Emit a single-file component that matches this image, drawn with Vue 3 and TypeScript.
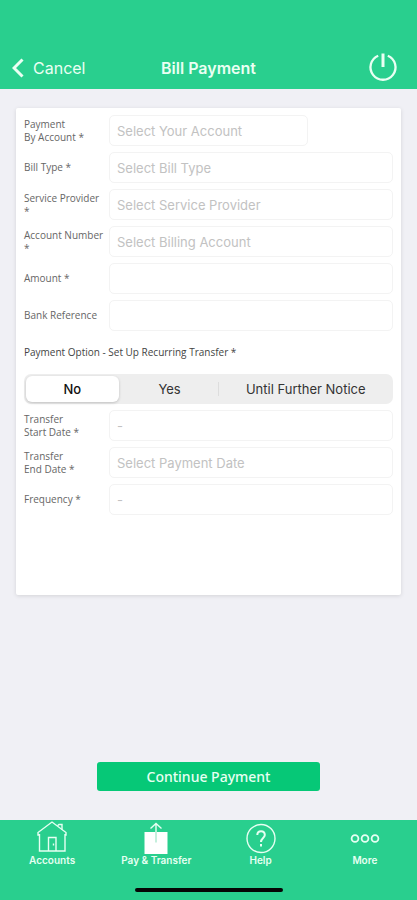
<script setup lang="ts">
import { ref } from 'vue'

interface Field {
  id: string
  lines: string[]
  kind: 'select' | 'text'
  placeholder: string
  short?: boolean
}

const paymentFields: Field[] = [
  { id: 'payment-account', lines: ['Payment', 'By Account *'], kind: 'select', placeholder: 'Select Your Account', short: true },
  { id: 'bill-type', lines: ['Bill Type *'], kind: 'select', placeholder: 'Select Bill Type' },
  { id: 'provider', lines: ['Service Provider', '*'], kind: 'select', placeholder: 'Select Service Provider' },
  { id: 'account-number', lines: ['Account Number', '*'], kind: 'select', placeholder: 'Select Billing Account' },
  { id: 'amount', lines: ['Amount *'], kind: 'text', placeholder: '' },
  { id: 'bank-reference', lines: ['Bank Reference'], kind: 'text', placeholder: '' },
]

const scheduleFields: Field[] = [
  { id: 'start-date', lines: ['Transfer', 'Start Date *'], kind: 'text', placeholder: '-' },
  { id: 'end-date', lines: ['Transfer', 'End Date *'], kind: 'text', placeholder: 'Select Payment Date' },
  { id: 'frequency', lines: ['Frequency *'], kind: 'select', placeholder: '-' },
]

const groups = [
  { name: 'payment', fields: paymentFields },
  { name: 'schedule', fields: scheduleFields },
]

const options = [
  { value: 'no', label: 'No' },
  { value: 'yes', label: 'Yes' },
  { value: 'ufn', label: 'Until Further Notice' },
]
const recurring = ref('no')
</script>

<template>
  <div class="screen">
    <header class="top">
      <button class="cancel" type="button">
        <svg class="chevron" viewBox="0 0 12 20" aria-hidden="true"><path d="M10.500 1.500 2 10l8.500 8.500" /></svg>
        <span>Cancel</span>
      </button>
      <h1 class="title">Bill Payment</h1>
      <button class="power" type="button" aria-label="Log out">
        <svg viewBox="0 0 28 28" aria-hidden="true">
          <path d="M9.200 1.700A12.500 12.500 0 1 0 18.800 1.700" />
          <path class="stem" d="M14 -.5V13" />
        </svg>
      </button>
    </header>

    <form class="content" @submit.prevent>
      <div class="card">
        <template v-for="group in groups" :key="group.name">
          <fieldset v-if="group.name === 'schedule'" class="recurring">
            <legend class="legend">Payment Option - Set Up Recurring Transfer *</legend>
            <div class="segments">
              <label
                v-for="option in options"
                :key="option.value"
                class="segment"
                :class="[option.value, { active: recurring === option.value }]"
              >
                <input v-model="recurring" class="radio" type="radio" name="recurring" :value="option.value" />
                <span>{{ option.label }}</span>
              </label>
            </div>
          </fieldset>
          <div class="rows">
            <div v-for="field in group.fields" :key="field.id" class="row">
              <label class="label" :for="field.id">
                <span v-for="line in field.lines" :key="line" class="line">{{ line }}</span>
              </label>
              <select v-if="field.kind === 'select'" :id="field.id" class="control" :class="{ short: field.short }">
                <option value="">{{ field.placeholder }}</option>
              </select>
              <input v-else :id="field.id" class="control" type="text" :placeholder="field.placeholder" />
            </div>
          </div>
        </template>
      </div>
      <button class="submit" type="submit">Continue Payment</button>
    </form>

    <footer class="bottom">
      <nav class="tabs">
        <a class="tab" href="#accounts">
          <svg class="icon" viewBox="0 0 32 32" aria-hidden="true">
            <path d="M3.500 13H2V10.500L16 0 30 10.500V13H28.500M3.500 12V29H29V12M12.500 29V15.500H20V29" />
            <path d="M21.500 3.800 23 2.500H26V7.500M17.500 21.500V23.500" />
          </svg>
          <span>Accounts</span>
        </a>
        <a class="tab" href="#transfer">
          <svg class="icon" viewBox="0 0 32 32" aria-hidden="true">
            <path class="solid" d="M4.500 10H27.500V32H4.500Z" />
            <path class="cut" d="M16 10V20.500" />
            <path d="M16 10V1.500M10.500 6.500 16 1.500 21.500 6.500" />
          </svg>
          <span>Pay &amp; Transfer</span>
        </a>
        <a class="tab" href="#help">
          <svg class="icon" viewBox="0 0 32 32" aria-hidden="true">
            <circle cx="16" cy="16.500" r="14" />
            <path class="mark" d="M12.300 13C12.300 8 19.800 8 19.800 13C19.800 16 16 16 16 20M16 22V24.500" />
          </svg>
          <span>Help</span>
        </a>
        <a class="tab" href="#more">
          <svg class="icon" viewBox="0 0 32 32" aria-hidden="true">
            <g class="rings"><circle cx="6" cy="16.500" r="3.400" /><circle cx="16" cy="16.500" r="3.400" /><circle cx="26" cy="16.500" r="3.400" /></g>
          </svg>
          <span>More</span>
        </a>
      </nav>
      <div class="home-indicator"></div>
    </footer>
  </div>
</template>

<style>
body {
  margin: 0;
  background: #f0f0f5;
}
</style>

<style scoped>
.screen,
.screen * {
  box-sizing: border-box;
}
.screen {
  display: flex;
  flex-direction: column;
  min-height: 100vh;
  background: #f0f0f5;
  font-family: Inter, "Liberation Sans", sans-serif;
}
button {
  padding: 0;
  border: 0;
  background: none;
  color: inherit;
  font: inherit;
  cursor: pointer;
}
svg {
  display: block;
  fill: none;
  stroke: currentColor;
}
.top {
  display: grid;
  grid-template-columns: 1fr auto 1fr;
  align-items: center;
  height: 89px;
  padding: 48px 12px 1px;
  background: #29cf8e;
  color: #eafff3;
}
.cancel {
  display: flex;
  align-items: center;
  gap: 9px;
  justify-self: start;
  font-size: 16px;
  line-height: 20px;
}
.chevron {
  width: 12px;
  height: 20px;
  stroke-width: 3;
}
.title {
  margin: 0;
  font-size: 16px;
  font-weight: 600;
  line-height: 20px;
}
.power {
  justify-self: end;
  padding-right: 8px;
}
.power svg {
  width: 28px;
  height: 28px;
  overflow: visible;
  stroke-width: 2.300;
}
.power .stem {
  stroke-width: 3;
}
.content {
  display: flex;
  flex: 1;
  flex-direction: column;
  align-items: center;
  padding: 19px 16px 29px;
}
.card {
  flex: 1;
  width: 100%;
  padding: 7px 8px;
  border-radius: 2px;
  background: #fff;
  box-shadow: 0 1px 4px rgba(0, 0, 0, 0.12);
}
.rows {
  display: grid;
  gap: 6px;
}
.row {
  display: grid;
  grid-template-columns: 85px 1fr;
  align-items: center;
}
.label {
  color: #666;
  font: 10px/13px "Open Sans", sans-serif;
}
.line {
  display: block;
  white-space: nowrap;
}
.control {
  appearance: none;
  width: 100%;
  height: 31px;
  margin: 0;
  padding: 0 7px;
  border: 1px solid #f3f3f3;
  border-radius: 5px;
  outline: none;
  background: #fff;
  color: #c2c2c2;
  font-family: inherit;
  font-size: 13px;
}
.control::placeholder {
  color: #c2c2c2;
  opacity: 1;
}
.control.short {
  width: 70%;
}
.recurring {
  min-width: 0;
  margin: 0;
  padding: 0 0 6px;
  border: 0;
}
.legend {
  padding: 14px 0;
  color: #444;
  font: 10px/15px "Open Sans", sans-serif;
}
.segments {
  display: grid;
  grid-template-columns: 97fr 98fr 175fr;
  height: 30px;
  border-radius: 7px;
  background: #eee;
}
.segment {
  position: relative;
  display: flex;
  align-items: center;
  justify-content: center;
  margin: 2px;
  border-radius: 6px;
  color: #333;
  font-size: 13px;
  cursor: pointer;
}
.segment.active {
  background: #fff;
  box-shadow: 0 1px 3px rgba(0, 0, 0, 0.2);
  color: #111;
  font-weight: 500;
}
.segment.ufn::before {
  position: absolute;
  top: 6px;
  bottom: 6px;
  left: -2px;
  width: 1px;
  background: #ddd;
  content: "";
}
.radio {
  position: absolute;
  inset: 0;
  width: 100%;
  height: 100%;
  margin: 0;
  opacity: 0;
  cursor: pointer;
}
.submit {
  width: 58%;
  height: 29px;
  margin-top: 167px;
  border-radius: 3px;
  background: #06c877;
  color: #e6fff2;
  font: 500 14px/20px "Noto Sans", sans-serif;
}
.bottom {
  display: flex;
  flex-direction: column;
  align-items: center;
  justify-content: space-between;
  height: 80px;
  padding: 2px 0 8px;
  background: #29cf8e;
}
.tabs {
  display: grid;
  grid-template-columns: repeat(4, 1fr);
  width: 100%;
}
.tab {
  display: flex;
  flex-direction: column;
  align-items: center;
  color: #e6fff2;
  font-size: 10px;
  font-weight: 600;
  line-height: 12px;
  text-decoration: none;
}
.icon {
  width: 32px;
  height: 32px;
  overflow: visible;
  stroke-width: 1.400;
}
.solid {
  fill: #fff;
  stroke: none;
}
.cut {
  stroke: #8adfba;
  stroke-width: 1;
}
.mark {
  stroke-width: 2;
}
.rings {
  stroke-width: 1.800;
}
.home-indicator {
  width: 148px;
  height: 4px;
  border-radius: 2px;
  background: #050505;
}
</style>
